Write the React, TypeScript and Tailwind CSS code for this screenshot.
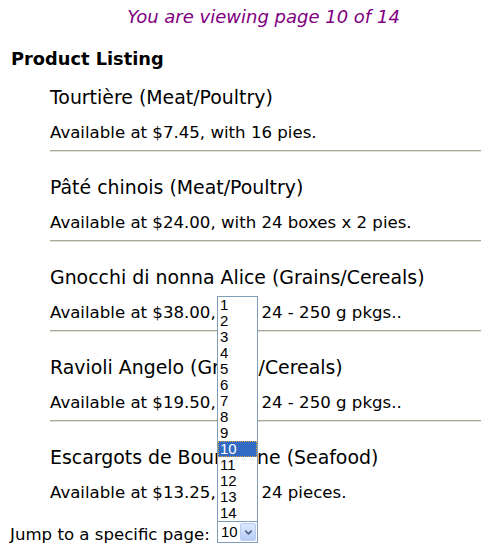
import { ChevronDown } from "lucide-react";

type Product = {
  name: string;
  category: string;
  price: string;
  qty: string;
};

const products: Product[] = [
  { name: "Tourtière", category: "Meat/Poultry", price: "$7.45", qty: "16 pies." },
  { name: "Pâté chinois", category: "Meat/Poultry", price: "$24.00", qty: "24 boxes x 2 pies." },
  { name: "Gnocchi di nonna Alice", category: "Grains/Cereals", price: "$38.00", qty: "24 - 250 g pkgs.." },
  { name: "Ravioli Angelo", category: "Grains/Cereals", price: "$19.50", qty: "24 - 250 g pkgs.." },
  { name: "Escargots de Bourgogne", category: "Seafood", price: "$13.25", qty: "24 pieces." },
];

const pages = Array.from({ length: 14 }, (_, i) => i + 1);

export default function App() {
  return (
    <div className="min-h-screen bg-white text-black font-['DejaVu_Sans',Verdana,sans-serif]">
      <p className="pt-[7px] pl-[24px] text-center text-[18px] leading-[20px] italic text-[#800080]">
        You are viewing page 10 of 14
      </p>

      <h3 className="mt-[20px] pl-[11px] text-[17.8px] leading-[24px] font-bold">Product Listing</h3>

      <div className="mt-[16px] ml-[50px] mr-[22px]">
        {products.map((p, i) => (
          <div key={p.name} className={i === 0 ? "" : "pt-[25px]"}>
            <div className="text-[18.9px] leading-[20px] whitespace-nowrap">
              {p.name} ({p.category})
            </div>
            <div className="mt-[16px] text-[16.6px] leading-[20px] whitespace-nowrap">
              Available at {p.price}, with {p.qty}
            </div>
            {i < products.length - 1 && (
              <div className="mt-[7px] h-[2px] border-t border-[#aca899] border-b border-b-[#e2dfd4]" />
            )}
          </div>
        ))}
      </div>

      <div className="mt-[18px] pl-[10px] flex items-start">
        <span className="w-[199px] pt-[3px] text-[16.6px] leading-[22px] whitespace-nowrap">Jump to a specific page:</span>
        <div className="relative ml-[8px]">
          <div className="absolute bottom-[21px] left-0 w-[41px] border border-[#7f9db9] bg-white font-['Liberation_Sans',Arial,sans-serif]">
            {pages.map((n) => (
              <div
                key={n}
                className={
                  n === 10
                    ? "h-[16px] pl-[2px] text-[15px] leading-[16px] bg-[#316ac5] text-white outline-1 outline-dotted outline-[#e5a33a] -outline-offset-1"
                    : "h-[16px] pl-[2px] text-[15px] leading-[16px]"
                }
              >
                {n}
              </div>
            ))}
          </div>
          <div className="flex h-[22px] w-[41px] items-center border border-[#7f9db9] bg-white">
            <span className="flex-1 pl-[3px] text-[15px] leading-[18px] font-['Liberation_Sans',Arial,sans-serif]">10</span>
            <span className="mr-[1px] flex h-[18px] w-[16px] items-center justify-center rounded-[2px] border border-[#b9cbf3] bg-gradient-to-b from-[#dde8fd] to-[#b6cbf7]">
              <ChevronDown className="h-[11px] w-[11px] text-[#4d6185]" strokeWidth={3.5} />
            </span>
          </div>
        </div>
      </div>
    </div>
  );
}
